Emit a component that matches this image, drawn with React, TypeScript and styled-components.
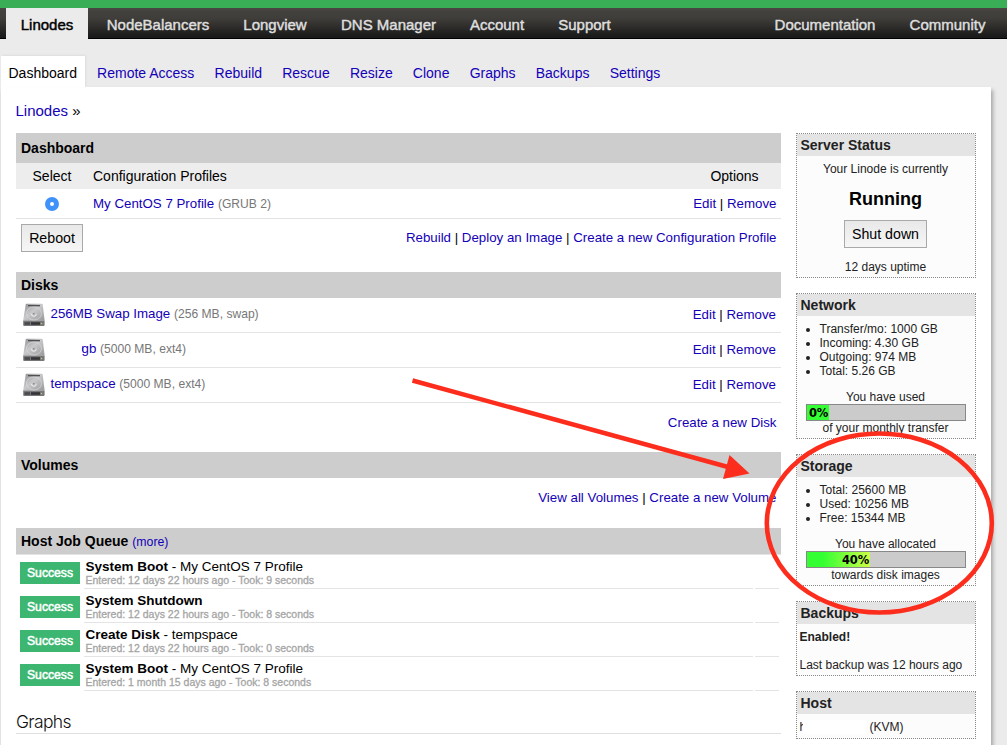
import React from "react";
import styled, { createGlobalStyle } from "styled-components";

const Global = createGlobalStyle`
  * { box-sizing: border-box; }
  html, body { margin: 0; height: 745px; overflow: hidden; }
  body { background: #ebebeb; font-family: "Liberation Sans", Arial, sans-serif; font-size: 13.3px; color: #000; }
  ul { margin: 0; padding: 0; }
`;

const Page = styled.div`
  position: relative;
  width: 1007px;
  height: 745px;
  overflow: hidden;
`;

const Nav = styled.nav`
  display: flex;
  height: 39px;
  padding-left: 6px;
  border-top: 8px solid #3aae57;
  border-bottom: 1px solid #000;
  background: linear-gradient(#4a4744 0, #43413d 3px, #403e3a 10px, #1b1b1b 28px);
`;

const NavItem = styled.a<{ $w: number; $active?: boolean; $push?: boolean }>`
  width: ${(p) => p.$w}px;
  height: ${(p) => (p.$active ? 31 : 30)}px;
  margin-left: ${(p) => (p.$push ? "auto" : "0")};
  text-align: center;
  line-height: 34px;
  font-size: 15px;
  color: ${(p) => (p.$active ? "#000" : "#dedede")};
  background: ${(p) => (p.$active ? "#ebebeb" : "transparent")};
  -webkit-text-stroke: 0.45px currentColor;
`;

const Tabs = styled.div`
  display: flex;
  height: 48px;
  padding: 17px 0 0 1px;
`;

const Tab = styled.a<{ $active?: boolean }>`
  height: 31px;
  padding: ${(p) => (p.$active ? "0 8px 0 7.5px" : "0 10.1px")};
  margin-right: ${(p) => (p.$active ? 2 : 0)}px;
  line-height: 34px;
  font-size: 14px;
  color: ${(p) => (p.$active ? "#000" : "#1400b8")};
  background: ${(p) => (p.$active ? "#fff" : "transparent")};
  box-shadow: ${(p) => (p.$active ? "1px -1px 2px rgba(0,0,0,.06)" : "none")};
`;

const Sheet = styled.div`
  width: 990px;
  height: 660px;
  margin-left: 1px;
  padding: 0 15px;
  background: #fff;
  box-shadow: 2px 3px 4px rgba(0, 0, 0, 0.3);
`;

const Crumb = styled.div`
  height: 46px;
  margin-left: -0.5px;
  line-height: 48px;
  font-size: 15px;
`;

const Link = styled.a`
  color: #1400b8;
`;

const Columns = styled.div`
  display: flex;
  justify-content: space-between;
`;

const Main = styled.main`
  width: 765px;
`;

const Header = styled.h2<{ $h?: number }>`
  margin: 0;
  height: ${(p) => p.$h ?? 26}px;
  line-height: ${(p) => p.$h ?? 26}px;
  padding-left: 5px;
  font-size: 14px;
  background: #cdcdcd;
`;

const More = styled(Link)`
  font-size: 12.3px;
  font-weight: normal;
`;

const ColumnHead = styled.div`
  display: flex;
  height: 26px;
  line-height: 27px;
  font-size: 14px;
  background: #ededed;
`;

const Cell = styled.div<{ $w?: number }>`
  width: ${(p) => (p.$w ? `${p.$w}px` : "auto")};
  flex: ${(p) => (p.$w ? "none" : "1")};
  padding-left: ${(p) => (p.$w ? 0 : 5)}px;
  text-align: ${(p) => (p.$w ? "center" : "left")};
`;

const ProfileRow = styled.div`
  display: flex;
  align-items: center;
  height: 30px;
  padding-right: 5px;
  border-bottom: 1px solid #e4e4e4;
`;

const RadioCell = styled.div`
  width: 77px;
  padding-left: 29px;
`;

const Radio = styled.div`
  width: 14px;
  height: 14px;
  border: 5px solid #4092fb;
  border-radius: 50%;
`;

const Spacer = styled.div`
  flex: 1;
`;

const Muted = styled.span`
  font-size: 12.1px;
  color: #777;
`;

const ActionRow = styled.div<{ $h: number; $pad: number }>`
  display: flex;
  justify-content: space-between;
  height: ${(p) => p.$h}px;
  padding: ${(p) => p.$pad}px 4.5px 0 5px;
`;

const ActionLinks = styled.div<{ $mt?: number }>`
  margin: ${(p) => p.$mt ?? 0}px 0 0 auto;
  line-height: 16px;
`;

const Button = styled.button<{ $w: number }>`
  width: ${(p) => p.$w}px;
  height: 28px;
  padding: 0;
  border: 1px solid #a9a9a9;
  background: linear-gradient(#e9e9e9, #f6f6f6);
  font: 14.2px "Liberation Sans", Arial, sans-serif;
  color: #000;
`;

const DiskRow = styled.div`
  display: flex;
  height: 35px;
  padding: 0 5px 0 6px;
  border-bottom: 1px solid #e4e4e4;
  line-height: 32px;
`;

const DiskIconSvg = styled.svg`
  width: 24px;
  height: 24px;
  margin: 5px 4.500px 0 0;
`;

const Redacted = styled.span`
  display: inline-block;
  width: 31px;
`;

const Dot = styled.span`
  display: inline-block;
  width: 1px;
  height: 5px;
  margin: 0 -1px 2px 0;
  background: #6a60d8;
`;

const RowLinks = styled.div`
  line-height: 34px;
`;

const ProfileLinks = styled.div`
  margin-right: -0.5px;
`;

const Jobs = styled.div`
  height: 137px;
  border-top: 1px solid #e4e4e4;
`;

const Job = styled.div`
  display: flex;
  height: 34px;
  padding: 0 2px 0 4px;
`;

const Badge = styled.div`
  width: 60px;
  height: 22px;
  margin: 7px 4px 0 0;
  background: #3cb671;
  color: #fff;
  text-align: center;
  line-height: 22px;
  font-size: 12.2px;
  -webkit-text-stroke: 0.5px #fff;
`;

const JobText = styled.div`
  width: 669px;
  padding: 4px 0 0 1.5px;
  border-bottom: 1px solid #e4e4e4;
  line-height: 15px;
  font-size: 13.5px;
`;

const JobEnd = styled.div`
  flex: 1;
  margin-left: 2px;
  border-bottom: 1px solid #e4e4e4;
`;

const JobMeta = styled.div`
  line-height: 13px;
  font-size: 10.5px;
  color: #a5a5a5;
  -webkit-text-stroke: 0.3px #a5a5a5;
`;

const GraphsTitle = styled.h3`
  margin: 15px 0 0;
  height: 28px;
  border-bottom: 1px solid #e0e0e0;
  font: 300 17.500px/32px Inter, sans-serif;
  letter-spacing: -0.65px;
  color: #111;
`;

const Side = styled.aside`
  width: 180px;
`;

const Box = styled.section<{ $h: number }>`
  height: ${(p) => p.$h}px;
  margin-bottom: 15px;
  border: 1px dotted #888;
  background: #fcfcfc;
  font-size: 12px;
  line-height: 14px;
  color: #222;
`;

const BoxTitle = styled.h4`
  margin: 0;
  height: 22px;
  padding-left: 3.500px;
  line-height: 22px;
  font-size: 14px;
  background: #e4e4e4;
`;

const Center = styled.div<{ $mt?: number }>`
  margin: ${(p) => p.$mt ?? 0}px 1px 0 0;
  text-align: center;
`;

const Running = styled.div`
  margin: 12px 1px 10px 0;
  text-align: center;
  line-height: 22px;
  font-size: 18px;
  font-weight: bold;
  color: #000;
`;

const Facts = styled.ul`
  padding: 6px 0 0 22.5px;
  list-style: none;
`;

const Fact = styled.li`
  &::before {
    content: "";
    display: inline-block;
    width: 4px;
    height: 4px;
    margin: 0 10px 1px -14px;
    border-radius: 50%;
    background: #222;
  }
`;

const Bar = styled.div`
  width: 160px;
  height: 17px;
  margin: 0 0 0 9px;
  border: 1px solid #888;
  background: #cbcbcb;
`;

const Fill = styled.div<{ $w: number; $bg: string }>`
  width: ${(p) => p.$w}px;
  height: 15px;
  padding-right: 1px;
  background: ${(p) => p.$bg};
  text-align: right;
  font: bold 11.5px/17px "DejaVu Sans", sans-serif;
  letter-spacing: -0.2px;
  color: #000;
`;

const Note = styled.div<{ $mt: number; $bold?: boolean }>`
  margin: ${(p) => p.$mt}px 0 0 2.5px;
  font-weight: ${(p) => (p.$bold ? "bold" : "normal")};
`;

const HostName = styled.span`
  display: inline-flex;
  width: 70px;
`;

const HostMask = styled.span`
  width: 63px;
  height: 14px;
  margin-left: -3px;
  background: #fff;
`;

const Annotation = styled.svg`
  position: absolute;
  inset: 0;
  pointer-events: none;
`;

const DiskIcon = () => (
  <DiskIconSvg viewBox="0 0 24 24">
    <defs>
      <linearGradient id="metal" x1="0" y1="0" x2="1" y2="1">
        <stop offset="0" stopColor="#8f8f92" />
        <stop offset=".45" stopColor="#c9c9cb" />
        <stop offset="1" stopColor="#98989b" />
      </linearGradient>
    </defs>
    <path d="M3.800 1Q4 .8 4.500 .8H19.500Q20.500 .8 20.700 1.500L22.600 17.500H1.200Z" fill="url(#metal)" />
    <path d="M1.200 17.500H22.600V22Q22.600 23 21.500 23H2.200Q1.200 23 1.200 22Z" fill="#77777a" />
    <rect x="2.500" y="19.200" width="5.500" height="2.600" fill="#4a4a4d" />
    <rect x="9" y="19.200" width="9" height="2.600" fill="#353538" />
    <rect x="6" y="2" width="12" height="1.300" fill="#515154" />
    <ellipse cx="12" cy="10.500" rx="7.500" ry="6.500" fill="none" stroke="#dededf" strokeWidth=".6" />
    <path d="M9.300 10.800Q9.500 13.300 12 13.300Q14.200 13.300 14.300 10.800" fill="none" stroke="#f4f4f4" strokeWidth=".9" />
    <circle cx="11.800" cy="10.800" r=".7" fill="#77777a" />
    <circle cx="19.500" cy="20.500" r=".7" fill="#d3c86c" />
  </DiskIconSvg>
);

const EditRemove = () => (
  <>
    <Link>Edit</Link> | <Link>Remove</Link>
  </>
);

const jobs = [
  { title: "System Boot", detail: " - My CentOS 7 Profile", meta: "Entered: 12 days 22 hours ago - Took: 9 seconds" },
  { title: "System Shutdown", detail: "", meta: "Entered: 12 days 22 hours ago - Took: 8 seconds" },
  { title: "Create Disk", detail: " - tempspace", meta: "Entered: 12 days 22 hours ago - Took: 0 seconds" },
  { title: "System Boot", detail: " - My CentOS 7 Profile", meta: "Entered: 1 month 15 days ago - Took: 8 seconds" },
];

export default function App() {
  return (
    <Page>
      <Global />
      <Nav>
        <NavItem $w={82} $active>Linodes</NavItem>
        <NavItem $w={140}>NodeBalancers</NavItem>
        <NavItem $w={94}>Longview</NavItem>
        <NavItem $w={133}>DNS Manager</NavItem>
        <NavItem $w={84}>Account</NavItem>
        <NavItem $w={91}>Support</NavItem>
        <NavItem $w={126} $push>Documentation</NavItem>
        <NavItem $w={119}>Community</NavItem>
      </Nav>
      <Tabs>
        <Tab $active>Dashboard</Tab>
        {["Remote Access", "Rebuild", "Rescue", "Resize", "Clone", "Graphs", "Backups", "Settings"].map((t) => (
          <Tab key={t}>{t}</Tab>
        ))}
      </Tabs>
      <Sheet>
        <Crumb>
          <Link>Linodes</Link> »
        </Crumb>
        <Columns>
          <Main>
            <Header $h={30}>Dashboard</Header>
            <ColumnHead>
              <Cell $w={72}>Select</Cell>
              <Cell>Configuration Profiles</Cell>
              <Cell $w={93}>Options</Cell>
            </ColumnHead>
            <ProfileRow>
              <RadioCell><Radio /></RadioCell>
              <div><Link>My CentOS 7 Profile</Link> <Muted>(GRUB 2)</Muted></div>
              <Spacer />
              <ProfileLinks><EditRemove /></ProfileLinks>
            </ProfileRow>
            <ActionRow $h={53} $pad={5}>
              <Button $w={62}>Reboot</Button>
              <ActionLinks $mt={6}>
                <Link>Rebuild</Link> | <Link>Deploy an Image</Link> | <Link>Create a new Configuration Profile</Link>
              </ActionLinks>
            </ActionRow>
            <Header>Disks</Header>
            <DiskRow>
              <DiskIcon />
              <div><Link>256MB Swap Image</Link> <Muted>(256 MB, swap)</Muted></div>
              <Spacer />
              <RowLinks><EditRemove /></RowLinks>
            </DiskRow>
            <DiskRow>
              <DiskIcon />
              <div><Redacted /><Dot /><Link>gb</Link> <Muted>(5000 MB, ext4)</Muted></div>
              <Spacer />
              <RowLinks><EditRemove /></RowLinks>
            </DiskRow>
            <DiskRow>
              <DiskIcon />
              <div><Link>tempspace</Link> <Muted>(5000 MB, ext4)</Muted></div>
              <Spacer />
              <RowLinks><EditRemove /></RowLinks>
            </DiskRow>
            <ActionRow $h={49} $pad={12}>
              <ActionLinks><Link>Create a new Disk</Link></ActionLinks>
            </ActionRow>
            <Header>Volumes</Header>
            <ActionRow $h={50} $pad={12}>
              <ActionLinks><Link>View all Volumes</Link> | <Link>Create a new Volume</Link></ActionLinks>
            </ActionRow>
            <Header>Host Job Queue <More>(more)</More></Header>
            <Jobs>
              {jobs.map((j, i) => (
                <Job key={i}>
                  <Badge>Success</Badge>
                  <JobText>
                    <b>{j.title}</b>{j.detail}
                    <JobMeta>{j.meta}</JobMeta>
                  </JobText>
                  <JobEnd />
                </Job>
              ))}
            </Jobs>
            <GraphsTitle>Graphs</GraphsTitle>
          </Main>
          <Side>
            <Box $h={145}>
              <BoxTitle>Server Status</BoxTitle>
              <Center $mt={6}>Your Linode is currently</Center>
              <Running>Running</Running>
              <Center><Button $w={83}>Shut down</Button></Center>
              <Center $mt={12}>12 days uptime</Center>
            </Box>
            <Box $h={146}>
              <BoxTitle>Network</BoxTitle>
              <Facts>
                <Fact>Transfer/mo: 1000 GB</Fact>
                <Fact>Incoming: 4.30 GB</Fact>
                <Fact>Outgoing: 974 MB</Fact>
                <Fact>Total: 5.26 GB</Fact>
              </Facts>
              <Center $mt={12}>You have used</Center>
              <Bar><Fill $w={22} $bg="#3f3">0%</Fill></Bar>
              <Center>of your monthly transfer</Center>
            </Box>
            <Box $h={132}>
              <BoxTitle>Storage</BoxTitle>
              <Facts>
                <Fact>Total: 25600 MB</Fact>
                <Fact>Used: 10256 MB</Fact>
                <Fact>Free: 15344 MB</Fact>
              </Facts>
              <Center $mt={12}>You have allocated</Center>
              <Bar><Fill $w={63} $bg="linear-gradient(90deg, #3f3 25%, #cf4)">40%</Fill></Bar>
              <Center>towards disk images</Center>
            </Box>
            <Box $h={75}>
              <BoxTitle>Backups</BoxTitle>
              <Note $mt={6} $bold>Enabled!</Note>
              <Note $mt={14}>Last backup was 12 hours ago</Note>
            </Box>
            <Box $h={48}>
              <BoxTitle>Host</BoxTitle>
              <Note $mt={6}><HostName>h<HostMask /></HostName>(KVM)</Note>
            </Box>
          </Side>
        </Columns>
      </Sheet>
      <Annotation width="1007" height="745" viewBox="0 0 1007 745">
        <path d="M412.500 380.500L728 467" stroke="#fc2d1c" strokeWidth="4.500" fill="none" />
        <path d="M729.500 455L749.500 473.500L723 479Z" fill="#fc2d1c" />
        <ellipse cx="879.300" cy="523" rx="112.500" ry="89.500" stroke="#fc2d1c" strokeWidth="4.600" fill="none" />
      </Annotation>
    </Page>
  );
}
